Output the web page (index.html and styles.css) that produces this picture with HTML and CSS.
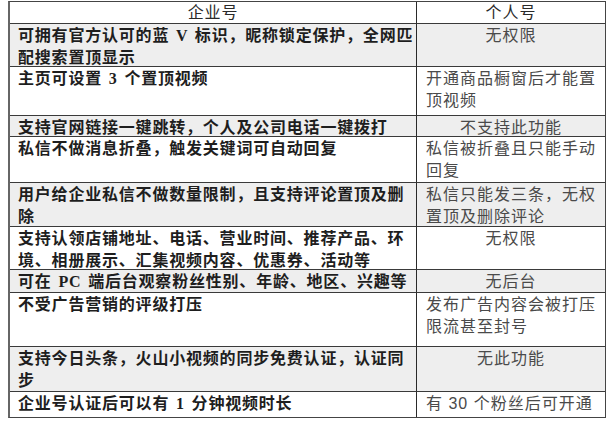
FILE: index.html
```html
<!DOCTYPE html>
<html lang="zh-CN">
<head>
<meta charset="utf-8">
<link rel="stylesheet" href="styles.css">
</head>
<body>
<div class="sheet">
  <div class="table">
    <div class="cell l head">企业号</div>
    <div class="cell r head c">个人号</div>

    <div class="cell l g">可拥有官方认可的蓝 V 标识，昵称锁定保护，全网匹<br>配搜索置顶显示</div>
    <div class="cell r g c">无权限</div>

    <div class="cell l">主页可设置 3 个置顶视频</div>
    <div class="cell r">开通商品橱窗后才能置<br>顶视频</div>

    <div class="cell l g">支持官网链接一键跳转，个人及公司电话一键拨打</div>
    <div class="cell r g c">不支持此功能</div>

    <div class="cell l">私信不做消息折叠，触发关键词可自动回复</div>
    <div class="cell r">私信被折叠且只能手动<br>回复</div>

    <div class="cell l g">用户给企业私信不做数量限制，且支持评论置顶及删<br>除</div>
    <div class="cell r g">私信只能发三条，无权<br>置顶及删除评论</div>

    <div class="cell l">支持认领店铺地址、电话、营业时间、推荐产品、环<br>境、相册展示、汇集视频内容、优惠券、活动等</div>
    <div class="cell r c">无权限</div>

    <div class="cell l g">可在 PC 端后台观察粉丝性别、年龄、地区、兴趣等</div>
    <div class="cell r g c">无后台</div>

    <div class="cell l">不受广告营销的评级打压</div>
    <div class="cell r">发布广告内容会被打压<br>限流甚至封号</div>

    <div class="cell l g">支持今日头条，火山小视频的同步免费认证，认证同<br>步</div>
    <div class="cell r g c">无此功能</div>

    <div class="cell l">企业号认证后可以有 1 分钟视频时长</div>
    <div class="cell r last">有 30 个粉丝后可开通<span class="mark" aria-hidden="true"></span></div>
  </div>
</div>
</body>
</html>
```
FILE: styles.css
```css
html, body {
  margin: 0;
  padding: 0;
  background: #ffffff;
}

.sheet {
  width: 608px;
  height: 430px;
  padding: 1px 0 0 8px;
  box-sizing: border-box;
}

.table {
  display: grid;
  grid-template-columns: 407px 188px;
  grid-template-rows: 22px 43px 49px 21px 46px 44px 43px 23px 54px 45px 25px;
  width: 595px;
  border: 1px solid #444;
  border-left: 2px solid #666;
  box-sizing: content-box;
}

.cell {
  border-bottom: 1px solid #3a3a3a;
  padding: 1px 0 0 8px;
  line-height: 22px;
  white-space: nowrap;
  background: #ffffff;
  min-width: 0;
}

.cell:nth-last-child(-n+2) {
  border-bottom: none;
}

.l {
  font-family: "Liberation Serif", "Noto Sans CJK SC", serif;
  font-size: 16px;
  letter-spacing: 0.8px;
  word-spacing: 2px;
  font-weight: 700;
  color: #1e1e1e;
  border-right: 1px solid #2a2a2a;
}

.r {
  font-family: "Liberation Sans", "Noto Sans CJK SC", sans-serif;
  font-size: 16px;
  letter-spacing: 1px;
  font-weight: 400;
  color: #4a4a4a;
  padding-left: 9px;
}

.head {
  font-weight: 400;
  text-align: center;
  color: #2a2a2a;
  padding-top: 0;
}

.l.head {
  padding-left: 0;
}

.c {
  text-align: center;
  padding-left: 0;
}

.g {
  background: #eeeeee;
}

.last {
  position: relative;
}

.mark {
  position: absolute;
  left: 92px;
  top: 5px;
  width: 12px;
  height: 12px;
  border-radius: 50%;
  border: 1.5px solid rgba(170, 170, 170, 0.6);
  box-sizing: border-box;
}
```
